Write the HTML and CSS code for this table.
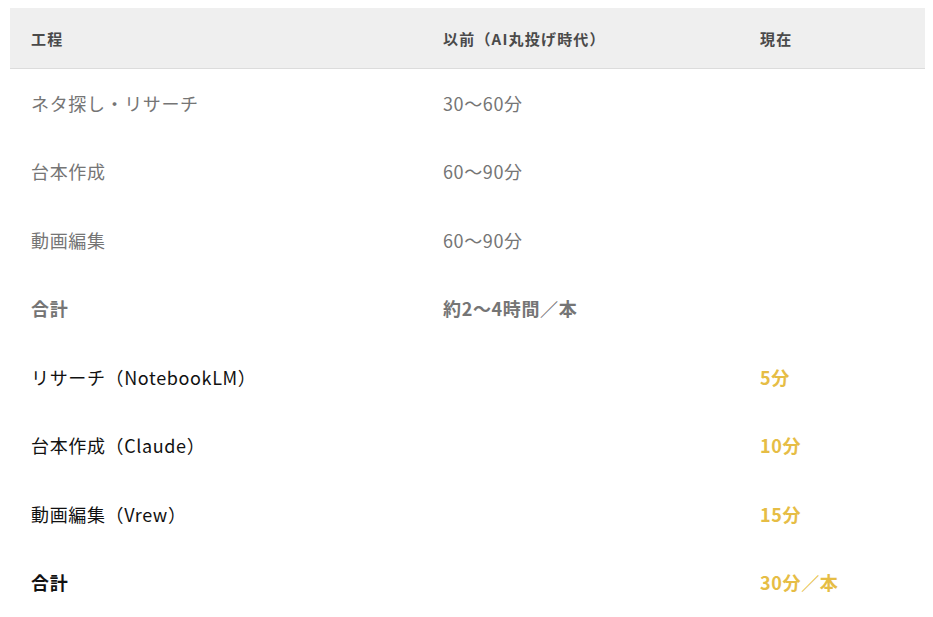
FILE: index.html
```html
<!DOCTYPE html>
<html lang="ja">
<head>
<meta charset="utf-8">
<link rel="stylesheet" href="styles.css">
</head>
<body>
<div class="wrap">
<table class="cmp">
  <thead>
    <tr><th class="c1">工程</th><th class="c2">以前（AI丸投げ時代）</th><th class="c3">現在</th></tr>
  </thead>
  <tbody>
    <tr class="old"><td>ネタ探し・リサーチ</td><td>30〜60分</td><td></td></tr>
    <tr class="old"><td>台本作成</td><td>60〜90分</td><td></td></tr>
    <tr class="old"><td>動画編集</td><td>60〜90分</td><td></td></tr>
    <tr class="old sum"><td>合計</td><td>約2〜4時間／本</td><td></td></tr>
    <tr class="new"><td>リサーチ（NotebookLM）</td><td></td><td class="gold">5分</td></tr>
    <tr class="new"><td>台本作成（Claude）</td><td></td><td class="gold">10分</td></tr>
    <tr class="new"><td>動画編集（Vrew）</td><td></td><td class="gold">15分</td></tr>
    <tr class="new sum"><td>合計</td><td></td><td class="gold">30分／本</td></tr>
  </tbody>
</table>
</div>
</body>
</html>
```

FILE: styles.css
```css
html, body {
  margin: 0;
  padding: 0;
  background: #ffffff;
}
body {
  font-family: "Noto Sans CJK JP", "Noto Sans", sans-serif;
}
.wrap {
  padding: 8px 8px 0 10px;
}
.cmp {
  width: 915px;
  border-collapse: collapse;
  table-layout: fixed;
}
.cmp th, .cmp td {
  text-align: left;
  padding: 0 0 0 21px;
  vertical-align: middle;
}
.cmp th {
  background: #efefef;
  height: 60px;
  font-size: 15px;
  font-weight: 700;
  letter-spacing: 0.08em;
  color: #4a4a4a;
  border-bottom: 1px solid #dcdcdc;
}
.c1 { width: 391px; }
.c2 { width: 296px; }
.c3 { width: auto; }
.cmp td {
  height: 68.5px;
  font-size: 18px;
  line-height: 1.4;
  letter-spacing: 0.035em;
}
.old td { color: #757575; }
.new td { color: #111111; }
.sum td { font-weight: 700; }
.cmp td.gold {
  color: #e6bd45;
  font-weight: 700;
}
```
